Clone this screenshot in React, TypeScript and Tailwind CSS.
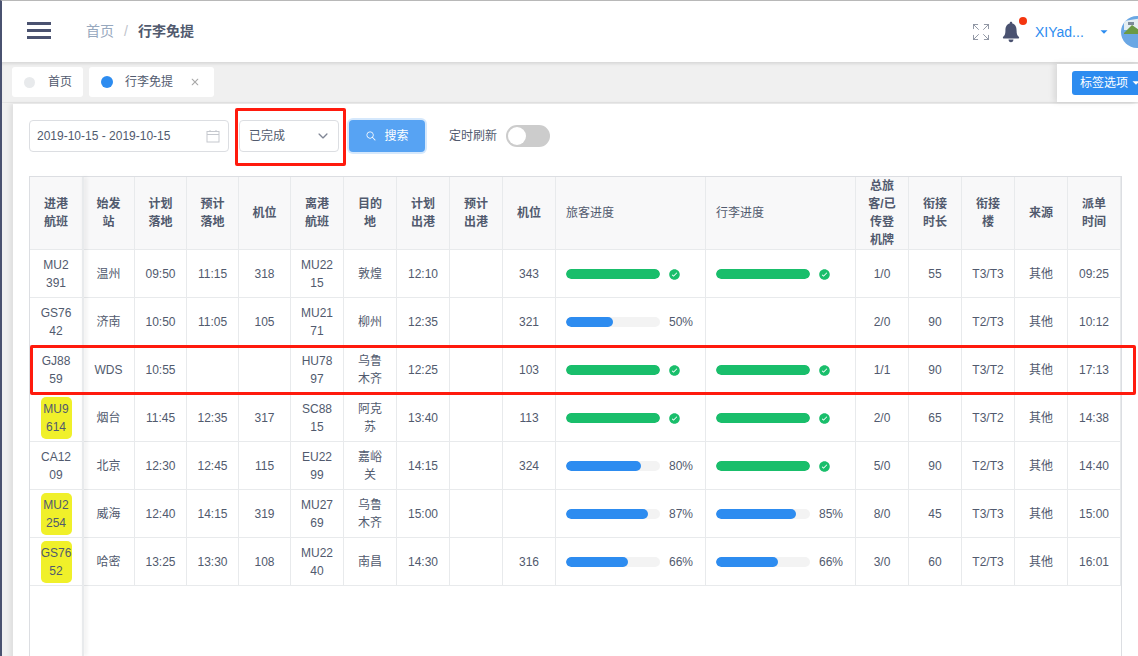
import { Expand } from 'lucide-react';
import {
  IoIosNotifications,
  IoIosSearch,
  IoIosArrowDown,
  IoIosCheckmarkCircle,
  IoIosClose,
} from 'react-icons/io';
import { IoMdArrowDropdown } from 'react-icons/io';

type Progress = number | 'done' | null;

type Row = {
  inFlight: string;
  mark?: boolean;
  from: string;
  planLand: string;
  estLand: string;
  stand: string;
  outFlight: string;
  to: string;
  planOut: string;
  outStand: string;
  pax: Progress;
  bag: Progress;
  total: string;
  mins: string;
  terminal: string;
  time: string;
};

const rows: Row[] = [
  { inFlight: 'MU2391', from: '温州', planLand: '09:50', estLand: '11:15', stand: '318', outFlight: 'MU2215', to: '敦煌', planOut: '12:10', outStand: '343', pax: 'done', bag: 'done', total: '1/0', mins: '55', terminal: 'T3/T3', time: '09:25' },
  { inFlight: 'GS7642', from: '济南', planLand: '10:50', estLand: '11:05', stand: '105', outFlight: 'MU2171', to: '柳州', planOut: '12:35', outStand: '321', pax: 50, bag: null, total: '2/0', mins: '90', terminal: 'T2/T3', time: '10:12' },
  { inFlight: 'GJ8859', from: 'WDS', planLand: '10:55', estLand: '', stand: '', outFlight: 'HU7897', to: '乌鲁木齐', planOut: '12:25', outStand: '103', pax: 'done', bag: 'done', total: '1/1', mins: '90', terminal: 'T3/T2', time: '17:13' },
  { inFlight: 'MU9614', mark: true, from: '烟台', planLand: '11:45', estLand: '12:35', stand: '317', outFlight: 'SC8815', to: '阿克苏', planOut: '13:40', outStand: '113', pax: 'done', bag: 'done', total: '2/0', mins: '65', terminal: 'T3/T2', time: '14:38' },
  { inFlight: 'CA1209', from: '北京', planLand: '12:30', estLand: '12:45', stand: '115', outFlight: 'EU2299', to: '嘉峪关', planOut: '14:15', outStand: '324', pax: 80, bag: 'done', total: '5/0', mins: '90', terminal: 'T2/T3', time: '14:40' },
  { inFlight: 'MU2254', mark: true, from: '威海', planLand: '12:40', estLand: '14:15', stand: '319', outFlight: 'MU2769', to: '乌鲁木齐', planOut: '15:00', outStand: '', pax: 87, bag: 85, total: '8/0', mins: '45', terminal: 'T3/T3', time: '15:00' },
  { inFlight: 'GS7652', mark: true, from: '哈密', planLand: '13:25', estLand: '13:30', stand: '108', outFlight: 'MU2240', to: '南昌', planOut: '14:30', outStand: '316', pax: 66, bag: 66, total: '3/0', mins: '60', terminal: 'T2/T3', time: '16:01' },
];

const headers = ['进港航班', '始发站', '计划落地', '预计落地', '机位', '离港航班', '目的地', '计划出港', '预计出港', '机位', '旅客进度', '行李进度', '总旅客/已传登机牌', '衔接时长', '衔接楼', '来源', '派单时间'];
const widths = [53, 52, 52, 52, 52, 53, 53, 53, 53, 53, 150, 150, 53, 53, 53, 53, 53];

const Cell = ({ children }: { children?: React.ReactNode }) => (
  <td className="border-r border-b border-[#e8eaec] px-[10px] text-center break-all">{children}</td>
);

const ProgressCell = ({ value }: { value: Progress }) => (
  <td className="border-r border-b border-[#e8eaec] pl-[10px]">
    {value !== null && (
      <div className="flex items-center">
        <div className="h-[10px] w-[94px] rounded-full bg-[#f3f3f3] overflow-hidden">
          <div
            className={value === 'done' ? 'h-full w-full rounded-full bg-[#19be6b]' : 'h-full rounded-full bg-[#2d8cf0]'}
            style={value === 'done' ? undefined : { width: `${value}%` }}
          />
        </div>
        {value === 'done' ? (
          <IoIosCheckmarkCircle className="ml-[8px] mt-[1px] text-[#19be6b]" size={13} />
        ) : (
          <span className="ml-[9px]">{value}%</span>
        )}
      </div>
    )}
  </td>
);

const App = () => {
  return (
    <div className="relative h-[656px] w-[1138px] overflow-hidden bg-[#f0f0f0] border-t border-l-2 border-t-[#b8b8b8] border-l-[#4a5270] text-[12px] leading-[18px] text-[#515a6e] [font-family:'Liberation_Sans','Noto_Sans_CJK_SC',sans-serif]">
      {/* top bar */}
      <header className="flex h-[61px] items-center bg-white pb-[2px]">
        <div className="ml-[25px] flex w-[24px] flex-col gap-[4px]">
          <span className="h-[3px] bg-[#4a5270]" />
          <span className="h-[3px] bg-[#4a5270]" />
          <span className="h-[3px] bg-[#4a5270]" />
        </div>
        <nav className="ml-[35px] flex items-center text-[14px]">
          <span className="text-[#97a8be]">首页</span>
          <span className="mx-[10px] text-[#c0c4cc]">/</span>
          <span className="font-bold text-[#515a6e]">行李免提</span>
        </nav>
        <div className="ml-auto flex items-center pt-[2px]">
          <Expand size={20} strokeWidth={1} className="mt-[1px] text-[#7d8494]" />
          <div className="relative ml-[7px] text-[#4a5270]">
            <IoIosNotifications size={26} />
            <span className="absolute right-[-3px] top-[-2px] h-[8px] w-[8px] rounded-full bg-[#f4360f]" />
          </div>
          <span className="ml-[11px] w-[52px] whitespace-nowrap text-[14px] text-[#2d8cf0]">XIYad...</span>
          <IoMdArrowDropdown size={14} className="ml-[10px] text-[#2d8cf0]" />
          <svg viewBox="0 0 32 32" className="ml-[10px] mr-[-15px] h-[32px] w-[32px] shrink-0 rounded-full">
            <rect width="32" height="32" fill="#6aa7e4" />
            <path d="M3 5 L22 2 L32 5 V14 H3 Z" fill="#e4eef2" />
            <path d="M3 17 L11 9 L18 14 L24 10 L32 14 V18 H3 Z" fill="#6b9a45" />
            <path d="M7 6 h6 v3 h-6 Z" fill="#7c8b99" />
          </svg>
        </div>
      </header>

      {/* tabs */}
      <div className="flex h-[41px] items-start justify-between bg-[#f0f0f0] shadow-[inset_0_3px_3px_-1px_rgba(0,0,0,0.1)] border-b border-[#e4e4e4]">
        <div className="ml-[10px] mt-[5px] flex gap-[6px]">
          <div className="flex h-[30px] w-[71px] items-center rounded-[3px] bg-white">
            <span className="ml-[12px] h-[11px] w-[11px] rounded-full bg-[#e8eaec]" />
            <span className="ml-[13px]">首页</span>
          </div>
          <div className="flex h-[30px] w-[125px] items-center rounded-[3px] bg-white">
            <span className="ml-[12px] h-[12px] w-[12px] rounded-full bg-[#2d8cf0]" />
            <span className="ml-[12px]">行李免提</span>
            <IoIosClose size={18} className="ml-[13px] text-[#a8a8a8]" />
          </div>
        </div>
        <div className="mt-[2px] flex h-[38px] w-[81px] items-center bg-white pl-[15px] shadow-[-3px_0_6px_rgba(0,0,0,0.1)]">
          <div className="flex h-[24px] w-[80px] shrink-0 items-center rounded-[3px] bg-[#2d8cf0] pl-[8px] text-white">
            标签选项
            <IoMdArrowDropdown size={14} className="ml-[1px]" />
          </div>
        </div>
      </div>

      {/* page */}
      <main className="ml-[11px] mt-[1px] h-[560px] bg-white pl-[16px] pt-[16px] shadow-[-3px_0_5px_rgba(0,0,0,0.08)]">
        <div className="flex h-[32px] items-center">
          <div className="flex h-[32px] w-[200px] items-center justify-between rounded-[4px] border border-[#dcdee2] pl-[7px] pr-[8px]">
            2019-10-15 - 2019-10-15
            <svg viewBox="0 0 14 14" className="h-[14px] w-[14px]" fill="none" stroke="#c5c8ce" strokeWidth="1">
              <rect x="1" y="2.5" width="12" height="10.5" />
              <path d="M1 5.5 H13 M4 1 V3 M10 1 V3" />
            </svg>
          </div>
          <div className="ml-[10px] flex h-[32px] w-[100px] items-center justify-between rounded-[4px] border border-[#dcdee2] pl-[9px] pr-[8px]">
            已完成
            <IoIosArrowDown size={14} className="text-[#808695]" />
          </div>
          <button className="ml-[10px] flex h-[32px] w-[76px] items-center justify-center gap-[7px] rounded-[4px] bg-[#57a3f3] text-white shadow-[0_0_0_2px_#d5e8fc]">
            <IoIosSearch size={12} />
            搜索
          </button>
          <span className="ml-[24px]">定时刷新</span>
          <div className="ml-[9px] flex h-[22px] w-[44px] items-center rounded-full bg-[#cccccc] pl-[2px]">
            <span className="h-[18px] w-[18px] rounded-full bg-white" />
          </div>
        </div>

        <div className="relative mt-[24px] h-[480px] w-[1093px] border-x border-t border-[#dcdee2]">
          <table className="table-fixed border-separate border-spacing-0">
            <colgroup>
              {widths.map((w, i) => (
                <col key={i} style={{ width: w }} />
              ))}
            </colgroup>
            <thead>
              <tr className="h-[72px] bg-[#f8f8f9] font-bold">
                {headers.map((h, i) => (
                  <th
                    key={i}
                    className={
                      i === 10 || i === 11
                        ? 'border-r border-b border-[#e8eaec] pl-[10px] text-left font-normal'
                        : 'border-r border-b border-[#e8eaec] px-[10px] text-center font-bold break-all'
                    }
                  >
                    {h}
                  </th>
                ))}
              </tr>
            </thead>
            <tbody>
              {rows.map((r) => (
                <tr key={r.inFlight} className="h-[48px]">
                  <td className="border-r border-b border-[#e8eaec] text-center">
                    <div className={r.mark ? 'mx-auto w-[31px] break-all rounded-[5px] bg-[#f0f02a] py-[3px]' : 'mx-auto w-[31px] break-all'}>
                      {r.inFlight}
                    </div>
                  </td>
                  <Cell>{r.from}</Cell>
                  <Cell>{r.planLand}</Cell>
                  <Cell>{r.estLand}</Cell>
                  <Cell>{r.stand}</Cell>
                  <Cell>{r.outFlight}</Cell>
                  <Cell>{r.to}</Cell>
                  <Cell>{r.planOut}</Cell>
                  <Cell />
                  <Cell>{r.outStand}</Cell>
                  <ProgressCell value={r.pax} />
                  <ProgressCell value={r.bag} />
                  <Cell>{r.total}</Cell>
                  <Cell>{r.mins}</Cell>
                  <Cell>{r.terminal}</Cell>
                  <Cell>其他</Cell>
                  <Cell>{r.time}</Cell>
                </tr>
              ))}
            </tbody>
          </table>
          {/* fixed first column edge */}
          <div className="absolute bottom-0 left-[52px] top-0 w-[2px] bg-[#e8eaec] shadow-[2px_0_4px_rgba(0,0,0,0.12)]" />
        </div>
      </main>

      {/* red annotation boxes */}
      <div className="absolute left-[233px] top-[107px] h-[58px] w-[111px] rounded-[2px] border-[3px] border-[#ff1a0d]" />
      <div className="absolute left-[28px] top-[344px] h-[50px] w-[1106px] rounded-[2px] border-[3px] border-[#ff1a0d]" />
    </div>
  );
};

export default App;
